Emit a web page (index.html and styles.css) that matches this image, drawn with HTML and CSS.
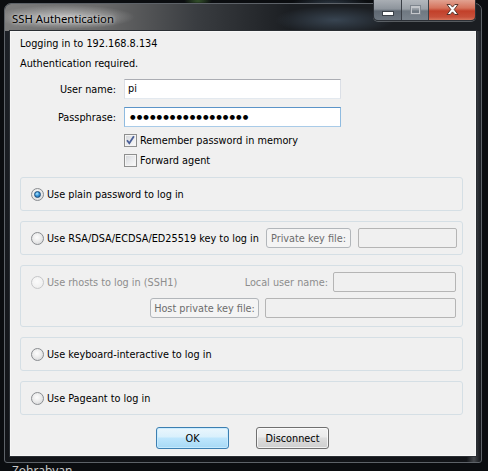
FILE: index.html
```html
<!DOCTYPE html>
<html>
<head>
<meta charset="utf-8">
<title>SSH Authentication</title>
<link rel="stylesheet" href="styles.css">
</head>
<body>
<div class="desktop">
  <div class="window">
    <div class="titlebar">
      <span class="title">SSH Authentication</span>
    </div>
    <div class="caption">
      <span class="cb cb-min"><i class="min-glyph"></i></span>
      <span class="cb cb-max"><i class="max-glyph"></i></span>
      <span class="cb cb-close">
        <svg width="13" height="11" viewBox="0 0 13 11"><path d="M1 0.5h3.2l2.3 2.6 2.3-2.6h3.2l-3.8 5 3.8 5h-3.2l-2.3-2.6-2.3 2.6h-3.2l3.8-5z" fill="#fff" stroke="#4a2a22" stroke-width="0.9" stroke-linejoin="round"/></svg>
      </span>
    </div>
    <div class="client">
      <p class="line">Logging in to 192.168.8.134</p>
      <p class="line">Authentication required.</p>
      <div class="form">
        <span class="lbl">User name:</span>
        <div class="edit">pi</div>
        <span class="lbl">Passphrase:</span>
        <div class="edit focus"><span class="mask">●●●●●●●●●●●●●●●●●●</span></div>
      </div>
      <div class="checks">
        <div class="check"><span class="cbx"><svg width="11" height="11" viewBox="0 0 11 11"><path d="M2 5.2l2.3 3 4.6-7" fill="none" stroke="#4a5f97" stroke-width="1.8"/></svg></span>Remember password in memory</div>
        <div class="check"><span class="cbx"></span>Forward agent</div>
      </div>
      <div class="groups">
        <div class="group g-single">
          <div class="opt"><span class="radio on"></span>Use plain password to log in</div>
        </div>
        <div class="group g-single">
          <div class="opt"><span class="radio"></span>Use RSA/DSA/ECDSA/ED25519 key to log in</div>
          <span class="dbtn dbtn-key">Private key file:</span>
          <span class="field f-key"></span>
        </div>
        <div class="group g-rhosts">
          <div class="grow">
            <div class="opt dis"><span class="radio dis"></span>Use rhosts to log in (SSH1)</div>
            <span class="dlabel">Local user name:</span>
            <span class="field f-local"></span>
          </div>
          <div class="grow grow-end">
            <span class="dbtn dbtn-host">Host private key file:</span>
            <span class="field f-host"></span>
          </div>
        </div>
        <div class="group g-single">
          <div class="opt"><span class="radio"></span>Use keyboard-interactive to log in</div>
        </div>
        <div class="group g-single">
          <div class="opt"><span class="radio"></span>Use Pageant to log in</div>
        </div>
      </div>
      <div class="buttons">
        <button class="btn btn-default">OK</button>
        <button class="btn">Disconnect</button>
      </div>
    </div>
  </div>
  <div class="desk-label">Zohrabyan</div>
</div>
</body>
</html>
```

FILE: styles.css
```css
html, body {
  margin: 0;
  padding: 0;
  overflow: hidden;
}
body {
  width: 488px;
  height: 471px;
  background: #0b0d10;
}
.desktop {
  width: 488px;
  height: 471px;
  padding-top: 3px;
  box-sizing: border-box;
  background:
    radial-gradient(ellipse 40px 12px at 330px 6px, rgba(120,150,180,.35), transparent),
    radial-gradient(ellipse 14px 4px at 198px 1px, rgba(80,130,60,.6), transparent),
    #0b0d10;
}
.window {
  position: relative;
  margin-left: 4px;
  width: 478px;
  height: 460px;
  box-sizing: border-box;
  border: 1px solid #5d6268;
  border-radius: 7px 7px 3px 3px;
  padding: 0 5px 6px 5px;
  background:
    linear-gradient(to right, rgba(255,255,255,0) 0, rgba(255,255,255,0) 97%, rgba(160,165,170,.35) 98.5%, rgba(255,255,255,0) 100%),
    linear-gradient(to bottom, rgba(30,34,40,1) 0, #121418 100%);
}
.titlebar {
  height: 27px;
  display: flex;
  align-items: center;
  padding-left: 7px;
  margin: 0 -5px;
  border-radius: 6px 6px 0 0;
  background:
    radial-gradient(ellipse 70px 12px at 60px 13px, rgba(215,215,215,.75), rgba(215,215,215,0)),
    radial-gradient(ellipse 60px 14px at 330px 16px, rgba(110,140,170,.35), rgba(0,0,0,0)),
    linear-gradient(to right, #7c7c7c 0, #6a6a6a 20%, #3a3d41 40%, #1b1e22 60%, #1b1e22 100%);
}
.title {
  font-family: "Noto Sans", "Open Sans", sans-serif;
  font-size: 11.3px;
  color: #000;
  margin-top: 1px;
  text-shadow: 0 0 6px rgba(230,230,230,.9), 0 0 3px rgba(230,230,230,.8);
}
.caption {
  position: absolute;
  top: -4px;
  right: 5px;
  display: flex;
  height: 20px;
  border: 1px solid #2c3036;
  border-top: none;
  border-radius: 0 0 5px 5px;
  overflow: hidden;
  box-shadow: 0 1px 0 rgba(200,205,210,.35);
}
.cb {
  position: relative;
  height: 20px;
  box-sizing: border-box;
  display: flex;
  align-items: center;
  justify-content: center;
}
.cb-min {
  width: 28px;
  border-right: 1px solid #3a3f46;
  background: linear-gradient(#a9aeb4 0, #8d949c 45%, #5f6872 55%, #6d7680 100%);
}
.cb-max {
  width: 27px;
  border-right: 1px solid #3a3f46;
  background: linear-gradient(#b3b8bd 0, #9ba1a8 45%, #6f7881 55%, #7b848d 100%);
}
.cb-close {
  width: 46px;
  background: linear-gradient(#e1a291 0, #d5735c 40%, #c2402a 55%, #c7503a 85%, #d8765d 100%);
}
.min-glyph {
  display: block;
  width: 10px;
  height: 3px;
  margin-top: 7px;
  background: #fff;
  box-shadow: 0 0 0 1px #3b4148;
}
.max-glyph {
  display: block;
  width: 7px;
  height: 5px;
  border: 1px solid #c3c6ca;
  border-top-width: 2px;
  box-shadow: 0 0 0 1px #7f868e;
  margin-top: -1px;
}
.cb-close svg {
  display: block;
  margin-top: -1px;
}
.client {
  height: 425px;
  box-sizing: border-box;
  background: #f0f0f0;
  border: 1px solid #f7f7f7;
  box-shadow: 0 0 0 1px #2a2e33;
  padding: 2px 12px 7px 9px;
  font-family: "DejaVu Sans Condensed", "Liberation Sans", sans-serif;
  font-size: 10.8px;
  color: #000;
}
.line {
  margin: 0;
  height: 20px;
  line-height: 20px;
  white-space: nowrap;
}
.form {
  margin-top: 5px;
  display: grid;
  grid-template-columns: 96px 217px;
  column-gap: 8px;
  row-gap: 8px;
  align-items: center;
}
.lbl {
  text-align: right;
  white-space: nowrap;
}
.edit {
  height: 20px;
  box-sizing: border-box;
  border: 1px solid;
  border-color: #abadb3 #dbdfe6 #e3e9ef #dbdfe6;
  background: #fff;
  padding: 0 3px;
  display: flex;
  align-items: center;
  line-height: 18px;
}
.edit.focus {
  border-color: #5b94c8 #8fbbe0 #a9cbe8 #8fbbe0;
}
.mask {
  font-family: "DejaVu Sans", sans-serif;
  font-size: 6.4px;
  letter-spacing: 1.05px;
  margin-left: 2px;
}
.checks {
  margin-top: 3px;
  margin-left: 104px;
}
.check {
  height: 20px;
  display: flex;
  align-items: center;
  white-space: nowrap;
}
.cbx {
  width: 13px;
  height: 13px;
  box-sizing: border-box;
  border: 1px solid #8e8f8f;
  margin-right: 3px;
  background: linear-gradient(135deg, #d2d5d9 0, #e9eaec 50%, #fbfbfb 100%);
  box-shadow: inset 0 0 0 1px #f4f4f4;
  display: flex;
  align-items: center;
  justify-content: center;
}
.cbx svg {
  display: block;
}
.groups {
  margin-top: 7px;
  width: 443px;
  display: flex;
  flex-direction: column;
  gap: 10px;
}
.group {
  box-sizing: border-box;
  border: 1px solid #d5dfe5;
  border-radius: 3px;
  padding: 0 5px 0 10px;
}
.g-single {
  height: 34px;
  display: flex;
  align-items: center;
}
.g-rhosts {
  height: 62px;
  padding-top: 6px;
  padding-right: 6px;
  display: flex;
  flex-direction: column;
  gap: 6px;
}
.grow {
  height: 20px;
  display: flex;
  align-items: center;
}
.grow-end {
  justify-content: flex-end;
}
.opt {
  display: flex;
  align-items: center;
  white-space: nowrap;
}
.opt.dis {
  color: #8d8d8d;
}
.radio {
  width: 13px;
  height: 13px;
  box-sizing: border-box;
  border-radius: 50%;
  border: 1px solid #8a8d91;
  margin-right: 3px;
  background: radial-gradient(circle at 45% 40%, #fdfdfd 0, #ececec 45%, #cfd1d3 100%);
  display: flex;
  align-items: center;
  justify-content: center;
  flex-shrink: 0;
}
.radio.on::after {
  content: "";
  width: 7px;
  height: 7px;
  box-sizing: border-box;
  border-radius: 50%;
  border: 1px solid #1b4a78;
  background: radial-gradient(circle at 40% 35%, #b4ecff 0, #3b98dc 45%, #155a97 100%);
}
.radio.dis {
  border-color: #c6c7c9;
  background: radial-gradient(circle at 45% 40%, #fbfbfb 0, #f1f1f1 60%, #e4e4e4 100%);
}
.dbtn {
  height: 20px;
  box-sizing: border-box;
  border: 1px solid #b2b6ba;
  border-radius: 3px;
  background: #f4f4f4;
  color: #6d6d6d;
  display: flex;
  align-items: center;
  justify-content: center;
  white-space: nowrap;
  flex-shrink: 0;
}
.dbtn-key {
  width: 85px;
  margin-left: auto;
  margin-right: 7px;
}
.dbtn-host {
  width: 109px;
  margin-right: 6px;
}
.field {
  height: 20px;
  box-sizing: border-box;
  border: 1px solid #b5b5b5;
  border-radius: 2px;
  background: #f0f0f0;
  flex-shrink: 0;
}
.f-key {
  width: 99px;
}
.f-local {
  width: 123px;
}
.f-host {
  width: 191px;
}
.dlabel {
  margin-left: auto;
  margin-right: 5px;
  color: #8d8d8d;
  white-space: nowrap;
}
.buttons {
  margin-top: 12px;
  display: flex;
  justify-content: center;
  gap: 27px;
  padding-left: 2px;
}
.btn {
  width: 73px;
  height: 22px;
  box-sizing: border-box;
  border: 1px solid #707070;
  border-radius: 3px;
  background: linear-gradient(#f2f2f2 0, #ebebeb 45%, #dddddd 50%, #cfcfcf 100%);
  box-shadow: inset 0 0 0 1px rgba(255,255,255,.7);
  font-family: "DejaVu Sans Condensed", "Liberation Sans", sans-serif;
  font-size: 10.8px;
  color: #000;
  padding: 0;
}
.btn-default {
  border-color: #3c7fb1;
  background: linear-gradient(#eaf6fd 0, #d9f0fc 45%, #bee6fd 50%, #a7d9f5 100%);
  box-shadow: inset 0 0 0 1px rgba(200,235,255,.9);
}
.desk-label {
  margin-top: 0;
  margin-left: 12px;
  font-family: "Noto Sans", sans-serif;
  font-size: 12px;
  line-height: 16px;
  color: #c9c9c9;
}
```
